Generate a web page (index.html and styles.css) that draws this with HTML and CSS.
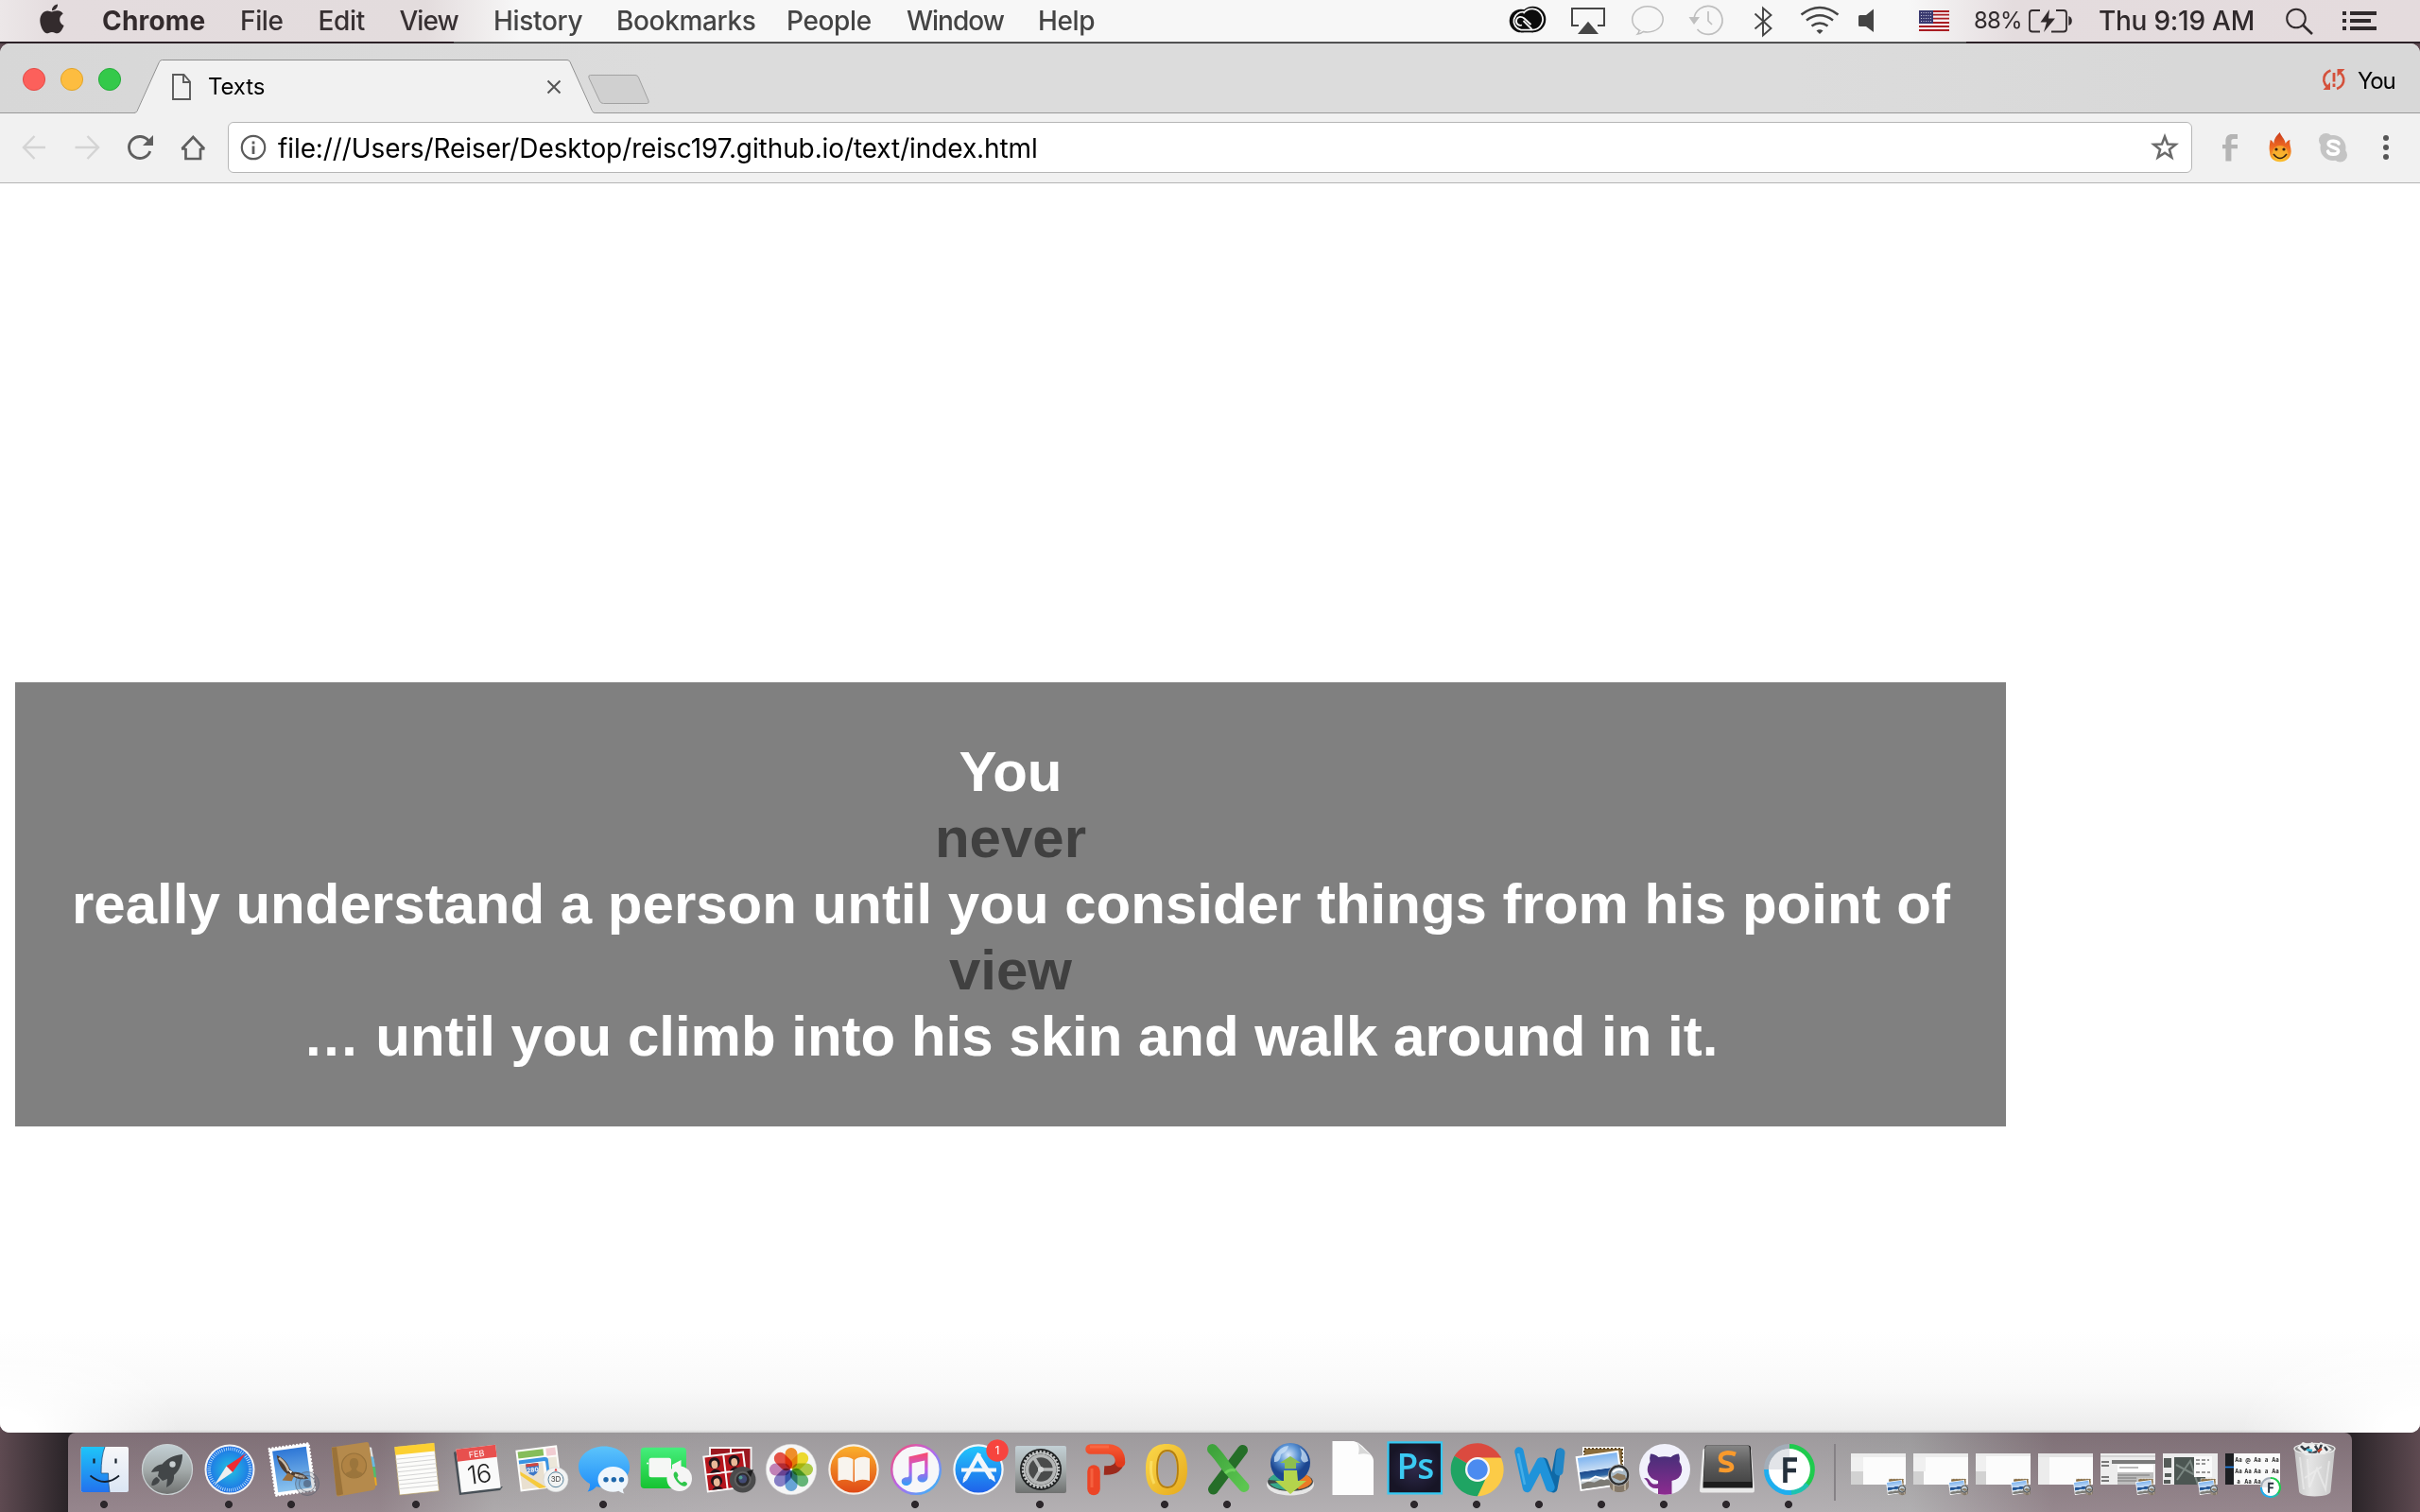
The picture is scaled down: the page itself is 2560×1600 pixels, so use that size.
FILE: index.html
```html
<!DOCTYPE html>
<html lang="en">
<head>
<meta charset="utf-8">
<title>Texts</title>
<link rel="stylesheet" href="styles.css">
</head>
<body>
<svg class="defs" width="0" height="0" aria-hidden="true">
  <defs>
    <linearGradient id="silver" x1="0" y1="0" x2="0" y2="1"><stop offset="0" stop-color="#c3d0d5"/><stop offset=".5" stop-color="#a5acac"/><stop offset="1" stop-color="#6f7170"/></linearGradient>
    <linearGradient id="finderL" x1="0" y1="0" x2="0" y2="1"><stop offset="0" stop-color="#1fc5f8"/><stop offset="1" stop-color="#2272ee"/></linearGradient>
    <linearGradient id="finderR" x1="0" y1="0" x2="0" y2="1"><stop offset="0" stop-color="#f7f7f9"/><stop offset="1" stop-color="#dbe6f4"/></linearGradient>
    <radialGradient id="safari"><stop offset="0" stop-color="#22c3e0"/><stop offset="1" stop-color="#1f6fe6"/></radialGradient>
    <linearGradient id="blue" x1="0" y1="0" x2="0" y2="1"><stop offset="0" stop-color="#5cc4fb"/><stop offset="1" stop-color="#1d8bf9"/></linearGradient>
    <linearGradient id="store" x1="0" y1="0" x2="0" y2="1"><stop offset="0" stop-color="#22c6fb"/><stop offset="1" stop-color="#1f62ea"/></linearGradient>
    <linearGradient id="sky" x1="0" y1="0" x2="0" y2="1"><stop offset="0" stop-color="#2e77d6"/><stop offset="1" stop-color="#8cc4ee"/></linearGradient>
    <linearGradient id="orange" x1="0" y1="0" x2="0" y2="1"><stop offset="0" stop-color="#fbb02c"/><stop offset="1" stop-color="#e04a16"/></linearGradient>
    <linearGradient id="note" x1="0" y1="0" x2="0" y2="1"><stop offset="0" stop-color="#fb4a68"/><stop offset=".5" stop-color="#c25ce6"/><stop offset="1" stop-color="#2ea0f8"/></linearGradient>
    <linearGradient id="ring" x1="0" y1="0" x2="1" y2="1"><stop offset="0" stop-color="#fb4a6e"/><stop offset=".5" stop-color="#b368ee"/><stop offset="1" stop-color="#22c4fb"/></linearGradient>
    <linearGradient id="red" x1="0" y1="0" x2="0" y2="1"><stop offset="0" stop-color="#f4532f"/><stop offset="1" stop-color="#e23a1c"/></linearGradient>
    <linearGradient id="gold" x1="0" y1="0" x2="1" y2="1"><stop offset="0" stop-color="#fbd84a"/><stop offset="1" stop-color="#e6a91c"/></linearGradient>
    <linearGradient id="green" x1="0" y1="0" x2="1" y2="1"><stop offset="0" stop-color="#3ea33c"/><stop offset="1" stop-color="#5cc650"/></linearGradient>
    <linearGradient id="facetime" x1="0" y1="0" x2="0" y2="1"><stop offset="0" stop-color="#45ee7c"/><stop offset="1" stop-color="#16c331"/></linearGradient>
    <radialGradient id="globe" cx=".45" cy=".3"><stop offset="0" stop-color="#d6e8fa"/><stop offset=".5" stop-color="#5c94d4"/><stop offset="1" stop-color="#1c4690"/></radialGradient>
    <radialGradient id="ps"><stop offset="0" stop-color="#2e2a4c"/><stop offset="1" stop-color="#171526"/></radialGradient>
    <linearGradient id="octo" x1="0" y1="0" x2="0" y2="1"><stop offset="0" stop-color="#462f78"/><stop offset="1" stop-color="#8d2b90"/></linearGradient>
    <linearGradient id="key" x1="0" y1="0" x2="0" y2="1"><stop offset="0" stop-color="#858585"/><stop offset=".5" stop-color="#5d5d5d"/><stop offset="1" stop-color="#474747"/></linearGradient>
    <linearGradient id="sea" x1="0" y1="0" x2="0" y2="1"><stop offset="0" stop-color="#7db4f0"/><stop offset=".45" stop-color="#c6dcf4"/><stop offset=".47" stop-color="#1d4a8c"/><stop offset=".65" stop-color="#2f67a4"/><stop offset=".75" stop-color="#d8e0e4"/><stop offset="1" stop-color="#7b8890"/></linearGradient>
    <linearGradient id="bin" x1="0" y1="0" x2="1" y2="0"><stop offset="0" stop-color="#c4c4c4"/><stop offset=".4" stop-color="#e4e4e4"/><stop offset="1" stop-color="#c8c8c8"/></linearGradient>
    <linearGradient id="fire" x1="0" y1="0" x2="0" y2="1"><stop offset="0" stop-color="#c93a1c"/><stop offset=".5" stop-color="#ef6a22"/><stop offset="1" stop-color="#fbc02c"/></linearGradient>

    <g id="preview">
      <path d="M13 15h44v36H13z" fill="#fff"/><path d="M15 17h40v30H15z" fill="#8a6c3c"/>
      <path d="M15 17h40v30H15z" fill="none" stroke="#5e4824" stroke-width="2" stroke-dasharray="2 2"/>
      <g transform="rotate(-8 30 41)"><path d="M8 22h46v37H8z" fill="#fff"/><path d="M10 24h42v33H10z" fill="url(#sea)"/><path d="M10 52l8-2 6 2 9-3 8 3 11-4v9H10z" fill="#7b7a74"/><path d="M11 48l8 1 7-3 9 4 8-3" fill="none" stroke="#fff" stroke-width="2"/></g>
      <path d="M42 48v9c2 8 18 8 20 0V46z" fill="#85796a"/><path d="M46 50v12M58 50v11" stroke="#b8ac98" stroke-width="2"/>
      <circle cx="51.500" cy="45" r="9.800" fill="#a9bac6" stroke="#303030" stroke-width="2.400"/><circle cx="51.500" cy="45" r="11.300" fill="none" stroke="#b5b5b5" stroke-width=".8"/>
      <path d="M44 47l6-4 8 2 1 4-6 2z" fill="#8c7a60"/><path d="M45 42q5-5 11-2" fill="none" stroke="#fff" stroke-width="2"/>
    </g>
    <g id="fontapp">
      <circle cx="34" cy="39" r="22.500" fill="#fff"/><path d="M34 39H12A22 22 0 0134 17z" fill="#e2e4e8"/>
      <path d="M9.500 39A24.500 24.500 0 0134 14.500" fill="none" stroke="#a3adb8" stroke-width="5"/>
      <path d="M34 14.500A24.500 24.500 0 0151 56.500" fill="none" stroke="#1fcb4e" stroke-width="5"/>
      <path d="M53 54.500A24.500 24.500 0 0134 63.500" fill="none" stroke="#1ec3b0" stroke-width="5"/>
      <path d="M36 63.500A24.500 24.500 0 019.500 39" fill="none" stroke="#1eaeee" stroke-width="5"/>
      <path d="M29.500 53V28.500H42M29.500 40H41" fill="none" stroke="#25303c" stroke-width="4.600"/>
    </g>
  </defs>
</svg>

<div class="desktop">
  <header class="menubar">
    <svg class="apple" width="108" height="44" viewBox="0 0 108 44"><path d="M61 4.500c.3 3.200-2.600 6.800-6 6.700-.3-3.200 2.800-6.500 6-6.700zM54.700 12.400c1.500 0 3.400-1.400 6.300-1.200 2.600.2 4.700 1.400 5.700 3.200-5.300 3.300-4.400 10.300.9 12.500-.8 2.200-3.400 8.300-6.900 8.400-2.300 0-3.100-1.400-5.700-1.400s-3.500 1.400-5.700 1.400c-3.400-.2-7-8.100-7-13.700 0-6.200 4-10 8-10.100 1.700 0 3.300.9 4.400.9z" fill="#332b2d"/></svg>
    <nav class="menus"><b>Chrome</b><span>File</span><span>Edit</span><span class="tight">View</span><span>History</span><span>Bookmarks</span><span>People</span><span class="tight">Window</span><span>Help</span></nav>
    <div class="status">
      <svg width="70" height="44" viewBox="1580 0 70 44"><g fill="#0c0c0c"><circle cx="1609" cy="22" r="12.300"/><circle cx="1621.500" cy="20.500" r="13.800"/><path d="M1609 22h13v12.300h-13z"/></g><g fill="none" stroke="#f7f7f7" stroke-width="1.800"><path d="M1613 12.800a9.600 9.600 0 10-4 18.900h12a11.200 11.200 0 10-9.500-17.500"/><path d="M1619.500 26l-7-6.500c-3-2.600-7-2.200-8.200 1-1.500 5 2.500 7 5.700 6"/><path d="M1611.500 22l9 9"/></g></svg>
      <svg width="62" height="44" viewBox="1650 0 62 44"><path d="M1670 27h-7V9h34v18h-7" fill="none" stroke="#464646" stroke-width="2"/><path d="M1669 36l11-13.300L1691 36z" fill="#464646"/></svg>
      <svg width="62" height="44" viewBox="1712 0 62 44"><path d="M1734 32c-4.500-2.600-7.300-7-7.300-11.500 0-7.600 7.200-13.800 16.200-13.800s16.300 6.200 16.300 13.700-7.300 13.500-16.300 13.500c-1.600 0-3-.2-4.400-.5-2 1.600-4 2.400-6.200 2.700 1.200-1.200 1.800-2.500 1.700-4.100z" fill="none" stroke="#bdbdbd" stroke-width="1.500"/></svg>
      <svg width="66" height="44" viewBox="1774 0 66 44"><path d="M1792 21a15 15 0 11 3.500 10M1807 12v10l4 4" fill="none" stroke="#bfbfbf" stroke-width="1.700"/><path d="M1786.500 18h11.500l-6 8z" fill="#bfbfbf"/></svg>
      <svg width="50" height="44" viewBox="1840 0 50 44"><path d="M1856.500 14.500l17 15.500-8.500 7.500V8.500l8.500 7.500-17 14.500" fill="none" stroke="#444" stroke-width="1.900"/></svg>
      <svg width="66" height="44" viewBox="1890 0 66 44"><g fill="none" stroke="#444" stroke-width="2.500"><path d="M1905.500 15.500q19.500-15 39 0"/><path d="M1911 21.500q14-10.500 28 0"/><path d="M1916.500 27.500q8.500-6 17 0"/></g><path d="M1921.500 32.500q3.500-2.500 7 0l-3.500 3.500z" fill="#444"/></svg>
      <svg width="54" height="44" viewBox="1956 0 54 44"><path d="M1966 17.500q0-1.500 1.500-1.500h6.500l8-6.500V34l-8-6h-6.500q-1.500 0-1.500-1.500z" fill="#444"/></svg>
      <svg width="78" height="44" viewBox="2010 0 78 44"><path d="M2030 11h32v22h-32z" fill="#f6eef0"/><path d="M2030 12h32M2030 15.600h32M2030 19.600h32M2030 24h32M2030 28h32M2030 32h32" stroke="#a91d22" stroke-width="1.900"/><path d="M2030 11h15v14h-15z" fill="#3a3a70"/><path d="M2032 13.500h12M2032 16.500h12M2032 19.500h12M2032 22.500h12" stroke="#c9c9dc" stroke-width="1" stroke-dasharray="1 1.500"/></svg>
      <span class="battery">88%</span>
      <svg width="79" height="44" viewBox="2141 0 79 44"><g fill="none" stroke="#302a2c" stroke-width="1.800"><path d="M2158 11h-8q-3 0-3 3v16.500q0 3 3 3h8M2175 11h8q3 0 3 3v16.500q0 3-3 3h-13"/></g><path d="M2168 10l-9.500 13.500h6.500l-3 10.500 12-14.500h-7z" fill="#302a2c"/><path d="M2188.300 17q3.500 1 3.500 5t-3.500 5z" fill="#302a2c"/></svg>
      <span class="clock">Thu 9:19 AM</span>
      <svg width="170" height="44" viewBox="2390 0 170 44"><circle cx="2429" cy="19.500" r="9.800" fill="none" stroke="#302a2c" stroke-width="2"/><path d="M2436 26.500l10 9.500" stroke="#302a2c" stroke-width="2.600"/><path d="M2486 14h28M2486 22h22M2486 30h28M2478 14h4M2478 22h4M2478 30h4" stroke="#302a2c" stroke-width="3.800"/></svg>
    </div>
  </header>

  <section class="window">
    <div class="tabstrip">
      <svg class="lights" width="143" height="73" viewBox="0 46 143 73"><circle cx="36" cy="84" r="11.600" fill="#fc605b" stroke="#e2443f" stroke-width=".9"/><circle cx="76" cy="84" r="11.600" fill="#fdbd40" stroke="#dfa023" stroke-width=".9"/><circle cx="116" cy="84" r="11.600" fill="#34c94a" stroke="#20a835" stroke-width=".9"/></svg>
      <div class="tab">
        <svg class="tab-shape" width="488" height="74" viewBox="142 46 488 74"><path d="M142 119.500l2-1.500 24.500-52.500q1-2 3-2H600q2 0 3 2L627.500 118l2 1.500v1H142z" fill="#f1f1f1"/><path d="M142 119.500q2 0 3-2l23.500-52q1-2 3-2H600q2 0 3 2l23.500 52q1 2 3 2" fill="none" stroke="#8f8f8f" stroke-width="1"/></svg>
        <svg class="page-icon" width="20" height="28" viewBox="182 78 20 28"><path d="M183 79h11.500l6.500 7.500V105h-18zM194 79v8h7" fill="none" stroke="#5a5a5a" stroke-width="1.900"/></svg>
        <span class="tab-title">Texts</span>
        <svg class="close" width="18" height="18" viewBox="0 0 18 18"><path d="M2.500 2.500l13 13M15.500 2.500l-13 13" stroke="#555" stroke-width="2"/></svg>
      </div>
      <svg class="newtab" width="70" height="73" viewBox="620 46 70 73"><path d="M624.500 79.500H672q2.500 0 3.500 2.500l10.500 24.500q1 2.700-1.500 3h-46q-3 0-4-2.500L623 82.500q-1-3 1.500-3z" fill="#d0d0d0" stroke="#a2a2a2"/></svg>
      <div class="profile">
        <svg width="26" height="26" viewBox="2457 71 26 26"><g fill="none" stroke="#d4513b" stroke-width="2.600"><path d="M2466.500 74.500q-8 3-7.200 11 .8 4 3.700 6.500"/><path d="M2473 94q8-3 7.200-11-.8-4-3.700-6"/><path d="M2470 77v9.500M2470 88.500v3.500" stroke-width="2.800"/></g><path d="M2458.500 95h7.500v-8zM2473.500 73h8l-8 8z" fill="#d4513b"/></svg>
        <span>You</span>
      </div>
    </div>

    <div class="toolbar">
      <svg class="nav" width="241" height="72" viewBox="0 120 241 72">
        <path d="M48 156H25M36.500 144L25 156l11.500 12" fill="none" stroke="#d4d4d4" stroke-width="2.500"/>
        <path d="M79.500 156h24M92.500 144L104 156l-11.500 12" fill="none" stroke="#d4d4d4" stroke-width="2.500"/>
        <path d="M157.500 149.500A11.500 11.500 0 10158.800 160" fill="none" stroke="#5f5f5f" stroke-width="2.900"/><path d="M162 143v11h-11z" fill="#5f5f5f"/>
        <path d="M196.500 157v11h15.500v-11M192 157.500h4.500M216.500 157.500H212M192.500 157.500l11.800-12.500 11.800 12.500" fill="none" stroke="#5f5f5f" stroke-width="2.700"/>
      </svg>
      <div class="omnibox">
        <svg width="28" height="28" viewBox="0 0 28 28"><circle cx="14" cy="14" r="12.200" fill="none" stroke="#5c5c5c" stroke-width="2.200"/><path d="M14 12.500V21M14 7.500v3" stroke="#5c5c5c" stroke-width="2.800"/></svg>
        <span class="url">file:///Users/Reiser/Desktop/reisc197.github.io/text/index.html</span>
        <svg width="30" height="30" viewBox="0 0 30 30"><path d="M15 3.500l3 8 8.700.3-6.800 5.400 2.400 8.400L15 20.700l-7.300 4.900 2.400-8.400-6.800-5.400 8.700-.3z" fill="none" stroke="#6a6a6a" stroke-width="2.500"/></svg>
      </div>
      <svg width="240" height="72" viewBox="2320 120 240 72">
        <path d="M2367 142v5h-4c-2 0-2.600 1-2.600 2.800v3.200h6.600v4.300h-6.600V170.500h-6V157.300h-3.400V153h3.400v-4c0-4.500 2.500-7 6.800-7z" fill="#b4b4b4"/>
        <path d="M2401 161c-1-5 0-8 .7-13 2 1 3 2.500 3.600 4 .5-6 3.200-8.500 6.500-12 1 4 5 6.500 6 12 1-2 2.500-3.500 4.600-4-1 4 1.200 8 1.300 12 0 7-5 11.300-11.700 11.300S2401 167 2401 161z" fill="url(#fire)"/><ellipse cx="2412" cy="162" rx="8" ry="8" fill="#fbc832" opacity=".6"/><circle cx="2408" cy="158" r="1.600" fill="#372012"/><circle cx="2416" cy="158" r="1.600" fill="#372012"/><path d="M2405 163q7 9 14 0" fill="none" stroke="#372012" stroke-width="1.500"/>
        <g fill="#c4c4c4"><circle cx="2468" cy="156.500" r="13.500"/><circle cx="2460.500" cy="148.500" r="7.500"/><circle cx="2475.500" cy="164" r="7.500"/></g><path d="M2474 152c-1-3-9.500-4-10.800-.2-1.200 4.700 10.800 3.500 10.400 8.200-.5 4.200-10 4-11 .2" fill="none" stroke="#fff" stroke-width="3.600" stroke-linecap="round"/>
        <g fill="#565656"><circle cx="2524" cy="146" r="3"/><circle cx="2524" cy="156" r="3"/><circle cx="2524" cy="166" r="3"/></g>
      </svg>
    </div>

    <main class="page">
      <div class="quote">
        <div>You</div>
        <div class="dim">never</div>
        <div>really understand a person until you consider things from his point of</div>
        <div class="dim">view</div>
        <div>… until you climb into his skin and walk around in it.</div>
      </div>
    </main>
  </section>

  <footer class="dock">
    <svg class="running" viewBox="0 0 66 84"><path d="M10.700 15H57q2 0 2 2v44q0 2-2 2H10.700q-2 0-2-2V17q0-2 2-2z" fill="url(#finderR)"/><path d="M34 15H10.700q-2 0-2 2v44q0 2 2 2H39q-1.500-9-1.500-20H30q0-18 4-28z" fill="url(#finderL)"/><path d="M34 15q-4 10-4 28h7.500q0 11 1.500 20" fill="none" stroke="#24507e" stroke-width=".8"/><path d="M22.500 27.500v5M45.500 27.500v5" stroke="#16202c" stroke-width="2.200"/><path d="M18.500 45.500q15.500 13 30.500 0" fill="none" stroke="#16202c" stroke-width="1.700"/></svg>
    <svg viewBox="0 0 66 84"><circle cx="34" cy="39" r="26.500" fill="url(#silver)" stroke="#ccd3d5" stroke-width="1.200"/><path d="M50 23c-10 1-17 5-21.500 10.500-5 .5-9 3-11.500 8.500l8-1-1 5 5 5 5-2-1 9c6-3 8.500-7 8-13C47 40 50 32 50 23zM23 47c-4 1-6 6-5.500 9 3 0 8-2 8.500-6z" fill="#424648"/><circle cx="39.500" cy="33.500" r="3.200" fill="#c7ced0"/></svg>
    <svg class="running" viewBox="0 0 66 84"><circle cx="34" cy="39" r="26.500" fill="#f4f4f4"/><circle cx="34" cy="39" r="24.500" fill="url(#safari)"/><circle cx="34" cy="39" r="21.800" fill="none" stroke="#bfe4fa" stroke-width="3.600" stroke-dasharray=".8 1.480"/><path d="M51 22L30.500 35.500l6.500 6.500z" fill="#ee2b32"/><path d="M18 55l12.500-19.500L37 42z" fill="#efefef"/></svg>
    <svg class="running" viewBox="0 0 66 84"><g transform="rotate(-8 34 39)"><path d="M13 14h42v50H13z" fill="#fff"/><path d="M13 14h42v50H13z" fill="none" stroke="#fff" stroke-width="2.600" stroke-linecap="round" stroke-dasharray=".1 3.600"/><path d="M16 17h36v44H16z" fill="url(#sky)"/><path d="M20 22c6 3 10 9 12 17l3 3c6 0 11 3 15 9-6 0-11 0-15-4l-8 2 2-5c-6-6-9-13-9-22z" fill="#4e3c30"/><path d="M22 25c4 4 7 9 8 15M36 45l10 4" stroke="#c9baa6" stroke-width="2.500" fill="none"/><path d="M22 49l7-7 6 4-3 5z" fill="#9b6f3e"/><path d="M30 39l4 2-2 2z" fill="#fff"/></g><circle cx="50" cy="54" r="12.500" fill="#586474" fill-opacity=".2" stroke="#5a6270" stroke-opacity=".6"/><circle cx="50" cy="54" r="8.500" fill="none" stroke="#4c5668" stroke-opacity=".6"/><circle cx="50" cy="54" r="4" fill="#47536a" opacity=".6"/></svg>
    <svg viewBox="0 0 66 84"><path d="M48 15l4 .7 2.500 14-4 1z" fill="#e2e2e2"/><path d="M50 25l4 .7 2 10-4 1z" fill="#69b9e0"/><path d="M52 36l4 .4 1 11-4 1z" fill="#4fbf6a"/><path d="M53 47l4 .4.800 8.300-4 .6z" fill="#eda91f"/><path d="M10 15.500L47 10q2 0 2.300 2l7 45q-.2 3-3.300 4l-36 6.500q-1.700 0-2-1.500L9.700 17z" fill="#b58a4c"/><path d="M10 16l5-.7 7 50-5 1.200q-1.700 0-2-1.500z" fill="#9a7239"/><circle cx="33.500" cy="35" r="13" fill="#b08344" stroke="#96713a" stroke-width="1.200"/><path d="M33.500 27c6 0 5.500 8 2.500 11 0 4 5 3 7 6-5 5-14 5-19 0 2-3 7-2 7-6-3-3-3.500-11 2.500-11z" fill="#9b753c"/></svg>
    <svg class="running" viewBox="0 0 66 84"><g transform="rotate(-6 34 39)"><path d="M13 13h42v51H13z" fill="#fcfcfa" stroke="#b49c5c" stroke-width=".6"/><path d="M13 13h42v8.500H13z" fill="#fcd032"/><path d="M13 26h42M13 30.500h42M13 35h42M13 39.500h42M13 44h42M13 48.500h42M13 53h42M13 57.500h42" stroke="#d4d4d4" stroke-width="1"/></g></svg>
    <svg viewBox="0 0 66 84"><path d="M7 21l5-3 8 44 39-5-3 4-43 5z" fill="#485057"/><g transform="rotate(-7 34 38)"><path d="M12 15h42v46H12z" fill="#fafafa"/><path d="M12 15h42v13H12z" fill="#e8504e"/><text x="33" y="25.500" class="cal-month">FEB</text><text x="33" y="53.500" class="cal-day">16</text></g></svg>
    <svg viewBox="0 0 66 84"><g transform="rotate(-7 30 39)"><path d="M9 16h44v44H9z" fill="#fcfcfa"/><path d="M11 18h27v7H11z" fill="#86bd5a"/><path d="M41 18h10v8H41z" fill="#f1cdd2"/><path d="M11 32h25v26H11z" fill="#e9e0d0"/><path d="M11 29h27q3 0 3 4v10" fill="none" stroke="#3b94e2" stroke-width="4"/><path d="M42 28h9v28h-9z" fill="#ece7da"/><path d="M11 43l18 16h8L11 39z" fill="#f6ca3c"/><path d="M18 32h13q2 10-6.500 13-8.500-3-6.500-13z" fill="#3d78c8"/><path d="M18 32h13v3H18z" fill="#d1453e"/><text x="24.500" y="41" class="shield">280</text></g><circle cx="49" cy="49.700" r="13" fill="#f2f3f3" stroke="#cfd2d2" stroke-width=".6"/><circle cx="49" cy="49.700" r="8" fill="none" stroke="#54809a" stroke-width="1"/><text x="49" y="52.300" class="three-d">3D</text><path d="M49 37.500l1.500 3h-3z" fill="#d33"/></svg>
    <svg class="running" viewBox="0 0 66 84"><path d="M34 14.500c15 0 27 9.500 27 21.700S49 58 34 58c-3 0-6-.4-8-1-2 2.500-5.500 5-9.500 5.500 2-2.500 3-6 2.500-8.500C11.500 50 7 43.500 7 36.200 7 24 19 14.500 34 14.500z" fill="url(#blue)"/><path d="M43.500 36c9 0 16 6 16 13.500 0 4.500-2 8-5.500 10.500 0 2 .4 3 1.400 4.500-2.500-.5-4.700-1.500-6-2.700-1.900.6-3.900 1-5.900 1-9 0-16-6-16-13.300S34.500 36 43.500 36z" fill="#eff6fc"/><g fill="#1f68ac"><circle cx="36" cy="49.700" r="2.700"/><circle cx="44.300" cy="49.700" r="2.700"/><circle cx="52.500" cy="49.700" r="2.700"/></g></svg>
    <svg viewBox="0 0 66 84"><rect x="6.700" y="15.700" width="48.300" height="43.300" rx="4" fill="url(#facetime)"/><rect x="15.500" y="26.700" width="23.500" height="20.500" rx="2.500" fill="#f5f7f5"/><path d="M40 34l9.500-5v16L40 40z" fill="#f5f7f5"/><circle cx="14" cy="32.500" r="1" fill="#fff"/><circle cx="47.700" cy="48.700" r="13.300" fill="#f5f5f5"/><path d="M42.500 42c2-1.500 3.500 1 4 3.300 0 1.200-1.500 1.700-1 2.700 1 2.500 2.500 4 4.700 5 1 .3 1.500-1.300 2.800-1.200 2 .5 4 2 2.500 3.700-2 2.500-6 1-9-2.200-3.500-3.600-6.500-8.800-4-11.300z" fill="#2fc64c"/></svg>
    <svg viewBox="0 0 66 84"><path d="M13 15h45.500v36H13z" fill="#f2f2f2"/><path d="M15 17h20v30H15zM37 17h19.500v30H37z" fill="#9b1820"/><g transform="rotate(-7 30 42)"><path d="M8.500 22h44v39h-44z" fill="#f8f8f8"/><path d="M10.500 24h19v17h-19zM31.500 24h19v17h-19zM10.500 43h19v16h-19zM31.500 43h19v16h-19z" fill="#b5151c"/><g fill="#20141a"><circle cx="20" cy="31" r="6"/><circle cx="41" cy="31" r="6"/><circle cx="20" cy="50" r="6"/><path d="M14 41q6-7 12 0zM35 41q6-7 12 0zM14 59q6-7 12 0z"/></g><g fill="#eab898"><ellipse cx="20" cy="32.500" rx="3.400" ry="4.300"/><ellipse cx="41" cy="32.500" rx="3.400" ry="4.300"/><ellipse cx="20" cy="51.500" rx="3.400" ry="4.300"/></g></g><circle cx="48.700" cy="49.700" r="13.800" fill="#4b4b4c"/><circle cx="48.700" cy="49.700" r="8" fill="#2b2b2d" stroke="#606060" stroke-width="2"/><circle cx="48.700" cy="49" r="4.500" fill="#424a74"/><circle cx="46.500" cy="47.500" r="2" fill="#4f9b90"/><path d="M53 41l7-2-3 8z" fill="#1c1c1c"/></svg>
    <svg viewBox="0 0 66 84"><circle cx="34" cy="39" r="26.700" fill="#f6f6f6" stroke="#d4d4d4" stroke-width=".6"/><g class="petals"><rect x="27.500" y="16" width="13" height="22" rx="6.500" fill="#f8932b"/><rect x="27.500" y="16" width="13" height="22" rx="6.500" fill="#f5e130" transform="rotate(45 34 39)"/><rect x="27.500" y="16" width="13" height="22" rx="6.500" fill="#b3d249" transform="rotate(90 34 39)"/><rect x="27.500" y="16" width="13" height="22" rx="6.500" fill="#69bb7b" transform="rotate(135 34 39)"/><rect x="27.500" y="16" width="13" height="22" rx="6.500" fill="#6ba9de" transform="rotate(180 34 39)"/><rect x="27.500" y="16" width="13" height="22" rx="6.500" fill="#8b84cc" transform="rotate(225 34 39)"/><rect x="27.500" y="16" width="13" height="22" rx="6.500" fill="#c886bd" transform="rotate(270 34 39)"/><rect x="27.500" y="16" width="13" height="22" rx="6.500" fill="#ed5548" transform="rotate(315 34 39)"/></g></svg>
    <svg viewBox="0 0 66 84"><circle cx="34" cy="39" r="26.700" fill="#f4f0ea"/><circle cx="34" cy="39" r="24.500" fill="url(#orange)"/><path d="M34 29c-4-4-12-4-16.500-1.500V51c6-2 12-2 16 1.500V29zM35 29c4-4 12-4 16-1.500V51c-6-2-12-2-16 1.500z" fill="#f8f4ee"/></svg>
    <svg class="running" viewBox="0 0 66 84"><circle cx="34" cy="39" r="25.800" fill="#f7f7f9" stroke="url(#ring)" stroke-width="2.500"/><path d="M26.500 25.500L46.500 21v25.500c0 4-3 6-6 6s-5-1.800-5-4c0-3 2.500-4.500 5.500-4.500 1 0 2-.3 2.200-1.500V29.500l-13.500 3V50c0 3.500-2.700 6-6 6-3 0-5-2-5-4.300 0-3 2.500-4.500 5.500-4.500 1.400 0 2.300-.6 2.300-2z" fill="url(#note)"/></svg>
    <svg viewBox="0 0 66 84"><circle cx="34" cy="39" r="26.700" fill="#f4f6f8"/><circle cx="34" cy="39" r="24.500" fill="url(#store)"/><g stroke="#f2f6fa" fill="none"><path d="M16 39.500h37" stroke-width="4"/><path d="M35 22L20 49" stroke-width="4.500"/><path d="M33 24l15 24" stroke-width="5.500"/></g><path d="M18 48l4 2-4.500 3.500zM45.500 48l5-2.500 1.500 7z" fill="#f2f6fa"/><circle cx="54" cy="19" r="11.700" fill="#f7443e"/><text x="54" y="22.700" class="badge">1</text></svg>
    <svg class="running" viewBox="0 0 66 84"><rect x="7" y="14" width="54" height="50" rx="2" fill="url(#silver)"/><circle cx="34" cy="39" r="22" fill="#1e2021"/><circle cx="34" cy="39" r="17.500" fill="#4a4b4b" stroke="#c2c4c4" stroke-width="1.500"/><circle cx="34" cy="39" r="18.500" fill="none" stroke="#c2c4c4" stroke-width="3.500" stroke-dasharray="2.200 1.676"/><circle cx="34" cy="39" r="14.500" fill="none" stroke="#b5b7b7" stroke-width="3.500"/><path d="M34 39h14M34 39l-7-12M34 39l-7 12" stroke="#b5b7b7" stroke-width="3.500"/><circle cx="34" cy="39" r="3" fill="#d2d4d4"/></svg>
    <svg viewBox="0 0 66 84"><path d="M35 40q17 1 17-13" fill="none" stroke="#9c2a1c" stroke-width="9.500"/><path d="M20.500 17.500H40q12 1 12 14" fill="none" stroke="url(#red)" stroke-width="10.500" stroke-linecap="round"/><path d="M24 41v18.500" stroke="#ec4526" stroke-width="13.500" stroke-linecap="round"/><path d="M22 38v20M20 15h20" stroke="#ff7b56" stroke-width="3" opacity=".5"/></svg>
    <svg class="running" viewBox="0 0 66 84"><path d="M35 12c14 0 22 8 22 27s-8 27-22 27-22-8-22-27 8-27 22-27zm1 8c-6 0-10 6-10 19s4 18 10 18 10-5 10-18-4-19-10-19z" fill="url(#gold)" fill-rule="evenodd"/><path d="M36 19c-7 0-11 7-11 20s4 19 11 19 11-6 11-19-4-20-11-20z" fill="none" stroke="#b37e12" stroke-width="1.800"/><path d="M19 30q-2 14 3 24" fill="none" stroke="#ffeb7a" stroke-width="3" opacity=".6"/></svg>
    <svg class="running" viewBox="0 0 66 84"><path d="M49.500 18.500L18.500 60" stroke="#256e28" stroke-width="11" stroke-linecap="round"/><path d="M17.500 17.500Q24 24 32 36l19 21.500" fill="none" stroke="url(#green)" stroke-width="11" stroke-linecap="round"/><path d="M42 40Q36 38 31 43" fill="none" stroke="#6dd25c" stroke-width="3"/></svg>
    <svg viewBox="0 0 66 84"><ellipse cx="34" cy="55" rx="25" ry="11.500" fill="#e6e6e6"/><ellipse cx="34" cy="52" rx="24" ry="10" fill="#404848"/><path d="M34 52L11 50q3-6 12-8zM34 61q-16 0-22-7l22-2z" fill="#36a88a"/><path d="M34 52l13-9q9 3 10 9-3 6-14 8z" fill="#ea7a26"/><circle cx="34" cy="32" r="21" fill="url(#globe)"/><path d="M17 26q6-12 15-12-1 6-8 9-1 9-7 8zM44 16q8 5 9 14-6 4-8-3 2-5-1-11z" fill="#cfe4f8" opacity=".75"/><path d="M34 25l11 7h-5v6H28v-6h-5z" fill="#8dbf4e"/><path d="M27 40h14l1 11h9L34 65 18 51h9z" fill="#b4d44c"/></svg>
    <svg viewBox="0 0 66 84"><path d="M12.500 9H35q5 1 9 5l8 8q4 4 4 8v36H12.500z" fill="#fdfdfd"/><path d="M38 10q4 5 2 13 8-2 13 1z" fill="#d8d8d8"/></svg>
    <svg class="running" viewBox="0 0 66 84"><path d="M5.500 10.300h56.500v54H5.500z" fill="url(#ps)" stroke="#35c8f2" stroke-width="2.200"/><text x="34" y="48.500" class="ps">Ps</text></svg>
    <svg class="running" viewBox="0 0 66 84"><path d="M34 39L9.500 24.800A28.300 28.300 0 0158.500 26z" fill="#db4a3f"/><path d="M34 39L9.500 24.800A28.300 28.300 0 0034 67.300l9-15z" fill="#1fa463"/><path d="M34 39l24.900-13H34l10 20-10 21.300A28.300 28.300 0 0058.500 26z" fill="#fccb47"/><path d="M34 26h24.900" stroke="#db4a3f" stroke-width="1"/><circle cx="34" cy="39" r="13" fill="#f6f6f6"/><circle cx="34" cy="39" r="10.700" fill="#4b8bf0"/></svg>
    <svg class="running" viewBox="0 0 66 84"><path d="M38 31l10 28 7-38" fill="none" stroke="#0f69a6" stroke-width="9" stroke-linecap="round" stroke-linejoin="round"/><path d="M12 20l8.500 38.500L35 31l10 27" fill="none" stroke="#1f93da" stroke-width="9.500" stroke-linecap="round" stroke-linejoin="round"/><path d="M56 21l-2 20" stroke="#2286c6" stroke-width="9" stroke-linecap="round"/><path d="M11 22l7 33" stroke="#5fc0f2" stroke-width="2.500" opacity=".6"/></svg>
    <svg class="running" viewBox="0 0 66 84"><use href="#preview"/></svg>
    <svg class="running" viewBox="0 0 66 84"><circle cx="34" cy="39" r="27" fill="#f1f1fb"/><path d="M19 22.500q5 0 8.500 3.500 6.500-1.500 13 0 3.500-3.500 8.500-3.500 1.500 4.500.5 8.500 3.500 4.500 2.500 10.500-1.500 8-10.500 9.500v14q-7.500 1.500-14.500 0v-6q-9 1-11.500-7-1-2.500-3.500-3.500 4-2 6.500 3 2.500 4.500 8.500 2.500v-3q-9-1.500-11-9.500-1-6 2.500-10.500-1-4 .5-8.500z" fill="url(#octo)"/></svg>
    <svg class="running" viewBox="0 0 66 84"><path d="M10 17h48q1.500 0 1.700 2l3.300 42q0 2.500-2 2.500H7.500q-2.500 0-2.500-2.500L8.300 19q.2-2 1.700-2z" fill="#e9e9e9"/><path d="M12 13.500h44q3 0 3 3l2 38v4H8.500v-4l2-38q0-3 1.500-3z" fill="#1c1c1c"/><path d="M13 13.500h42q2.500 0 2.700 3l2 35.500H9l2-35.500q.2-3 2-3z" fill="url(#key)"/><path d="M43 23q-5-2-10-1.500-6 .8-6 5.500 0 4 7 5.300 5.500 1.400 5 5-.8 4-13.500 2" fill="none" stroke="#f99a2c" stroke-width="4.600"/></svg>
    <svg class="running" viewBox="0 0 66 84"><use href="#fontapp"/></svg>
    <div class="separator"></div>
    <svg viewBox="0 0 66 84"><path d="M4 22h58v33H4z" fill="#fcfcfc"/><path d="M4 22h58v4H4z" fill="#ececec"/><path d="M4 26h13v15H4z" fill="#f0f0f0"/><path d="M4 41h13v14H4z" fill="#d2d2d2"/><use href="#preview" transform="translate(39 43) scale(.37)"/></svg>
    <svg viewBox="0 0 66 84"><path d="M4 22h58v33H4z" fill="#fcfcfc"/><path d="M4 22h58v4H4z" fill="#ececec"/><path d="M4 26h13v15H4z" fill="#f0f0f0"/><path d="M4 41h11v14H4z" fill="#d2d2d2"/><use href="#preview" transform="translate(39 43) scale(.37)"/></svg>
    <svg viewBox="0 0 66 84"><path d="M4 22h58v33H4z" fill="#fcfcfc"/><path d="M4 22h58v3H4z" fill="#ececec"/><path d="M4 25h11v16H4z" fill="#f0f0f0"/><path d="M4 41h11v14H4z" fill="#d2d2d2"/><use href="#preview" transform="translate(39 43) scale(.37)"/></svg>
    <svg viewBox="0 0 66 84"><path d="M4 22h58v33H4z" fill="#fcfcfc"/><path d="M4 22h58v4H4z" fill="#e4e4e4"/><path d="M4 26h12v29H4z" fill="#ececec"/><use href="#preview" transform="translate(39 43) scale(.37)"/></svg>
    <svg viewBox="0 0 66 84"><path d="M4 22h58v33H4z" fill="#ededed"/><path d="M16 29h46v4H16z" fill="#7a7a7a"/><path d="M22 34h38v8H22z" fill="#fff"/><path d="M22 42h38v13H22z" fill="#bdbdbd"/><path d="M24 37h20M22 45h34M22 48h20M22 51h20" stroke="#777" stroke-width="1"/><path d="M5 31h8M5 35h8M5 47h8M5 51h8" stroke="#777" stroke-width="2"/><path d="M4 25h58" stroke="#bbb"/><use href="#preview" transform="translate(39 43) scale(.37)"/></svg>
    <svg viewBox="0 0 66 84"><path d="M4 22h58v33H4z" fill="#ececec"/><path d="M16 26h33v29H16z" fill="#4c5652"/><path d="M5 27h8v10H5zM6 43h7v4H6zM5 50h7v4H5z" fill="#555b58"/><path d="M19 50l14-20 8 25M18 34l22 12" stroke="#7b8782" stroke-width="2" fill="none"/><path d="M37 25h19v22H37z" fill="#fafafa"/><path d="M39 29h14M39 33h11M39 42h15" stroke="#777" stroke-width="1.500" stroke-dasharray="4 2"/><use href="#preview" transform="translate(39 43) scale(.37)"/></svg>
    <svg viewBox="0 0 66 84"><path d="M4 22h58v33H4z" fill="#fafafa"/><path d="M4 22h9v33H4z" fill="#1d1f22"/><path d="M4 36.500h9" stroke="#2484ea" stroke-width="1.600"/><g class="samples"><text x="18" y="31">Aa</text><text x="28" y="31">@</text><text x="38" y="31">Aa</text><text x="47.500" y="31">a</text><text x="57" y="31">Aa</text><text x="18" y="43">Aa</text><text x="28" y="43">Aa</text><text x="38" y="43">Aa</text><text x="47.500" y="43">a</text><text x="57" y="43">Aa</text><text x="18" y="54">a</text><text x="28" y="54">Aa</text><text x="38" y="54">Aa</text></g><use href="#fontapp" transform="translate(38 42) scale(.41)"/></svg>
    <svg viewBox="0 0 66 84"><path d="M11 16q21 8 43 0l-4.500 46q-.5 5-17 5.500-16-.5-16.500-5.500z" fill="url(#bin)"/><path d="M17 26l4 34M25 28l2 30 8-20 9 22 4-30M22 48l18-12" fill="none" stroke="#f0f0f0" stroke-width="2" opacity=".6"/><ellipse cx="32.500" cy="17" rx="21.500" ry="5.500" fill="#8a8a8a"/><path d="M14 16l6-6 6 2 4-2 4 4 5-4 6 3 6 5-8 5-20 1z" fill="#f0f0f0"/><path d="M18 14l4 4 5-3M33 14l4 6 3-8M26 20l4 2 5-2M43 15l3 4" fill="none" stroke="#333b44" stroke-width="2.500"/><path d="M24 18l6 1" stroke="#35b4d4" stroke-width="2.500"/><path d="M36 20l4-3" stroke="#c9452e" stroke-width="2.500"/><ellipse cx="32.500" cy="17" rx="21.500" ry="5.500" fill="none" stroke="#e6e6e6" stroke-width="1.500"/></svg>
  </footer>
</div>
</body>
</html>
```
FILE: styles.css
```css
* { box-sizing: border-box; }
body { margin: 0; font-family: Inter, "Liberation Sans", sans-serif; }
svg { display: block; flex: none; }
.defs { position: absolute; }

.desktop {
  display: flex;
  flex-direction: column;
  width: 2560px;
  height: 1600px;
  overflow: hidden;
  background: linear-gradient(90deg, #5e4a51 0, #2a2428 72px, #2a2428 2488px, #5e4a51 2560px);
}

.menubar {
  display: flex;
  align-items: center;
  height: 46px;
  padding-bottom: 2px;
  font-size: 28px;
  line-height: 44px;
  white-space: nowrap;
  color: #444;
  background:
    linear-gradient(90deg, #2c2127 480px, #6a6a6a 480px, #6a6a6a 2080px, #2c2127 2080px) 0 44px / 100% 1px no-repeat,
    linear-gradient(90deg, #2c2127 480px, #38383a 480px, #38383a 2080px, #2c2127 2080px) 0 45px / 100% 1px no-repeat,
    linear-gradient(90deg, #ece7e8 0, #e4dcde 60px, #e3dcdd 450px, #f7f7f7 550px, #f7f7f7 2020px, #e4dcde 2130px, #e4dbdd 100%);
}
.menus {
  display: grid;
  grid-template-columns: 146px 82.500px 86px 99.600px 129.900px 180px 127px 139px 80px;
  letter-spacing: -.35px;
}
.menus span { font-weight: 450; }
.menus b { font-weight: 700; letter-spacing: .2px; color: #332b2d; }
.menus span:nth-child(-n+4) { color: #373032; }
.menus .tight { letter-spacing: -1px; }
.status { display: flex; align-items: center; margin-left: auto; color: #302a2c; }
.battery { width: 53px; font-size: 24px; letter-spacing: -.8px; }
.clock { width: 170px; letter-spacing: -.25px; font-weight: 450; }

.window {
  display: flex;
  flex-direction: column;
  height: 1470px;
  overflow: hidden;
  border-radius: 10px;
  background: #fff;
}

.tabstrip {
  display: flex;
  height: 74px;
  background: linear-gradient(90deg, #d7d7d7 0, #dcdcdc 700px, #dcdcdc 1900px, #d8d8d8 2300px);
  border-bottom: 1px solid #999;
}
.tab { position: relative; display: flex; align-items: center; width: 479px; height: 73px; padding: 19px 0 0 39px; }
.tab-shape { position: absolute; left: -1px; top: 0; }
.page-icon, .tab-title, .close { position: relative; }
.page-icon { margin-bottom: 1px; }
.tab-title { width: 356px; margin: 0 0 2px 18px; font-size: 24px; letter-spacing: -.1px; }
.close { margin: 0 0 1px 1px; }
.newtab { margin-left: -2px; }
.profile { display: flex; align-items: center; gap: 12px; width: 104px; margin-left: auto; padding-top: 6px; font-size: 24px; letter-spacing: -1.200px; }
.profile svg { margin-bottom: 4px; }

.toolbar {
  display: flex;
  align-items: center;
  height: 74px;
  padding-bottom: 1px;
  background: #f1f1f1;
  border-bottom: 1px solid #b4b4b4;
}
.omnibox {
  display: flex;
  align-items: center;
  width: 2078px;
  height: 54px;
  margin-right: 1px;
  padding: 0 13px 0 12px;
  border: 1px solid #b6b6b6;
  border-radius: 6px;
  background: #fff;
}
.url { flex: 1; margin: 2px 0 0 12px; font-size: 28px; letter-spacing: -.1px; color: #000; }

.page {
  flex: 1;
  padding: 528px 0 0 16px;
  background:
    radial-gradient(ellipse 190px 120px at 0 100%, #fff 20%, rgba(255, 255, 255, 0)),
    radial-gradient(ellipse 190px 120px at 100% 100%, #fff 20%, rgba(255, 255, 255, 0)),
    linear-gradient(#fff, #fff 1215px, #f9f9f9 1275px, #ececec 1319px, #d0d0d0);
}
.quote {
  width: 2106px;
  height: 470px;
  padding: 60px;
  background: #808080;
  color: #fff;
  font: bold 60px/70px "Liberation Sans", Arial, sans-serif;
  text-align: center;
  white-space: nowrap;
}
.quote .dim { color: #404040; }

.dock {
  display: flex;
  width: 2416px;
  height: 84px;
  margin-left: 72px;
  padding-left: 5px;
  border-radius: 8px 8px 0 0;
  background:
    linear-gradient(rgba(0, 0, 0, .08), rgba(255, 255, 255, .1)),
    linear-gradient(90deg, #8a7880 0, #8a7a81 330px, #a4a0a2 450px, #aba7aa 700px, #aba7aa 1850px, #a8a6a8 1950px, #8a7a81 2100px, #8a7880 100%);
}
.dock > svg { width: 66px; height: 84px; overflow: visible; }
.dock > .running { background: radial-gradient(circle at 33px 76px, #2c272b 3.600px, rgba(44, 39, 43, 0) 4.400px); }
.separator { flex: none; width: 2px; height: 60px; margin: 12px 12px 0 15px; background: #868286; }
.petals rect { mix-blend-mode: multiply; }
.dock text { text-anchor: middle; font-family: Inter, sans-serif; }
.cal-month { font-size: 9px; fill: #fff; }
.cal-day { font-size: 27px; font-weight: 300; fill: #222; letter-spacing: -1px; }
.shield { font-size: 6.500px; font-weight: 700; fill: #fff; }
.three-d { font-size: 8px; fill: #444; }
.badge { font-size: 12px; fill: #fff; }
.dock .ps { font-family: "Open Sans", sans-serif; font-size: 37px; font-weight: 600; fill: #3bcaf3; letter-spacing: -1px; }
.samples text { font-size: 5.500px; font-weight: 700; fill: #222; }
```
